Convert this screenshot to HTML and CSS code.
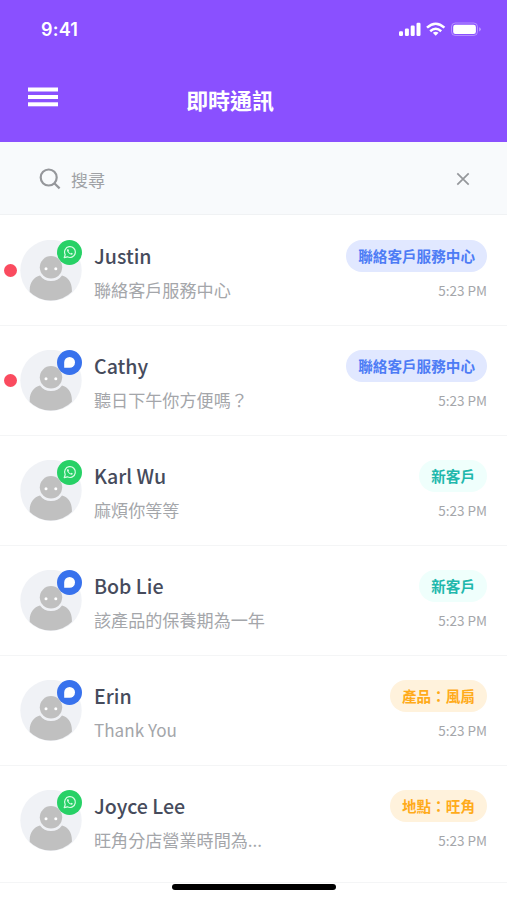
FILE: index.html
```html
<!DOCTYPE html>
<html lang="zh-Hant">
<head>
<meta charset="utf-8">
<meta name="viewport" content="width=device-width, initial-scale=1">
<title>即時通訊</title>
<link rel="stylesheet" href="styles.css">
</head>
<body>
<svg class="sprite" width="0" height="0" aria-hidden="true">
  <defs>
    <clipPath id="disc"><circle cx="30.75" cy="30" r="30.5"/></clipPath>
    <symbol id="avatar" viewBox="0 0 62 61">
      <circle cx="31" cy="30.5" r="30.7" fill="#f0f2f6"/>
      <g clip-path="url(#disc)">
        <path d="M9.700 61V50C9.700 42 14 37 20 35.400Q24 41 31 41T42 35.400C48 37 51.900 42 51.900 50V61Z" fill="#c0c0c0"/>
      </g>
      <circle cx="31" cy="27.300" r="11.200" fill="#c0c0c0"/>
      <circle cx="26" cy="28.800" r="1.500" fill="#fff"/>
      <circle cx="35.800" cy="28.800" r="1.500" fill="#fff"/>
    </symbol>
    <symbol id="whatsapp" viewBox="0 0 25 25">
      <circle cx="12.500" cy="12.500" r="12.500" fill="#27d166"/>
      <path d="M7.200 17.700L8.200 14.600A5.400 5.400 0 1 1 10.400 16.800Z" fill="none" stroke="#d9fbe5" stroke-width="1.200" stroke-linejoin="round"/>
      <path d="M10.500 9.200C9.400 10 10.200 11.800 11.600 13.100C13 14.500 14.900 15.200 15.600 14.200C16.100 13.500 15.800 13.300 14.500 12.700L13.600 13.500C12.700 13.100 11.900 12.300 11.500 11.500L12 10.700C11.500 9.300 11.200 8.900 10.500 9.200Z" fill="#d9fbe5"/>
    </symbol>
    <symbol id="chat" viewBox="0 0 25 25">
      <circle cx="12.500" cy="12.500" r="12.500" fill="#3872ed"/>
      <path d="M7.200 17.800V12.400A5.400 5.400 0 1 1 12.600 17.800Z" fill="#fff"/>
    </symbol>
  </defs>
</svg>
<header class="header">
  <div class="status">
    <span class="clock">9:41</span>
    <svg class="indicators" width="84" height="20" viewBox="0 0 84 20" fill="#fff">
      <rect x="1" y="11.200" width="4" height="4.800" rx="1.200"/>
      <rect x="6.900" y="8.500" width="4" height="7.500" rx="1.200"/>
      <rect x="12.700" y="5.500" width="4" height="10.500" rx="1.200"/>
      <rect x="18.500" y="2.700" width="4" height="13.300" rx="1.200"/>
      <g fill="none" stroke="#fff" stroke-width="2.500">
        <path d="M29 7.700Q37.700 -.300 46.400 7.700"/>
        <path d="M32.200 11.200Q37.700 6.300 43.200 11.200"/>
      </g>
      <path d="M37.700 15.800L34.800 12.800Q37.700 10.900 40.600 12.800Z"/>
      <rect x="53.500" y="3" width="26" height="12.500" rx="3.800" fill="none" stroke="#fff" stroke-opacity=".35"/>
      <rect x="55.200" y="4.700" width="22.700" height="9.200" rx="2.200"/>
      <path d="M81.200 7.200Q82.800 7.800 82.800 9.300T81.200 11.400Z" opacity=".45"/>
    </svg>
  </div>
  <div class="bar">
    <svg class="menu" width="30" height="20" viewBox="0 0 30 20" fill="#fff">
      <rect y=".500" width="30" height="4"/><rect y="8" width="30" height="4"/><rect y="15.300" width="30" height="4"/>
    </svg>
    <h1 class="title">即時通訊</h1>
  </div>
</header>
<div class="search">
  <svg width="22" height="22" viewBox="0 0 22 22" fill="none" stroke="#95979b" stroke-width="2.200">
    <circle cx="9.700" cy="9.500" r="8"/><path d="M15.300 15.200L20.600 20.400"/>
  </svg>
  <span class="placeholder">搜尋</span>
  <svg class="clear" width="14" height="14" viewBox="0 0 14 14" fill="none" stroke="#95979b" stroke-width="1.700">
    <path d="M1.300 1.300L12.700 12.700M12.700 1.300L1.300 12.700"/>
  </svg>
</div>
<main class="list">
  <article class="row unread">
    <div class="avatar"><svg class="face"><use href="#avatar"/></svg><svg class="channel"><use href="#whatsapp"/></svg></div>
    <div class="text"><h2 class="name">Justin</h2><p class="message">聯絡客戶服務中心</p></div>
    <div class="meta"><span class="tag blue">聯絡客戶服務中心</span><time class="time">5:23 PM</time></div>
  </article>
  <article class="row unread">
    <div class="avatar"><svg class="face"><use href="#avatar"/></svg><svg class="channel"><use href="#chat"/></svg></div>
    <div class="text"><h2 class="name">Cathy</h2><p class="message">聽日下午你方便嗎？</p></div>
    <div class="meta"><span class="tag blue">聯絡客戶服務中心</span><time class="time">5:23 PM</time></div>
  </article>
  <article class="row">
    <div class="avatar"><svg class="face"><use href="#avatar"/></svg><svg class="channel"><use href="#whatsapp"/></svg></div>
    <div class="text"><h2 class="name">Karl Wu</h2><p class="message">麻煩你等等</p></div>
    <div class="meta"><span class="tag teal">新客戶</span><time class="time">5:23 PM</time></div>
  </article>
  <article class="row">
    <div class="avatar"><svg class="face"><use href="#avatar"/></svg><svg class="channel"><use href="#chat"/></svg></div>
    <div class="text"><h2 class="name">Bob Lie</h2><p class="message">該產品的保養期為一年</p></div>
    <div class="meta"><span class="tag teal">新客戶</span><time class="time">5:23 PM</time></div>
  </article>
  <article class="row">
    <div class="avatar"><svg class="face"><use href="#avatar"/></svg><svg class="channel"><use href="#chat"/></svg></div>
    <div class="text"><h2 class="name">Erin</h2><p class="message">Thank You</p></div>
    <div class="meta"><span class="tag amber">產品：風扇</span><time class="time">5:23 PM</time></div>
  </article>
  <article class="row last">
    <div class="avatar"><svg class="face"><use href="#avatar"/></svg><svg class="channel"><use href="#whatsapp"/></svg></div>
    <div class="text"><h2 class="name">Joyce Lee</h2><p class="message">旺角分店營業時間為...</p></div>
    <div class="meta"><span class="tag amber">地點：旺角</span><time class="time">5:23 PM</time></div>
  </article>
</main>
<div class="home"></div>
</body>
</html>
```
FILE: styles.css
```css
* { box-sizing: border-box; }
body {
  margin: 0;
  height: 900px;
  overflow: hidden;
  background: #fff;
  font-family: "Noto Sans CJK TC", sans-serif;
}
h1, h2, p { margin: 0; }
svg { display: block; flex: none; }
.sprite { position: absolute; }

.header { height: 142px; background: #8a50ff; color: #fff; }
.status {
  height: 58px;
  padding: 0 25px 0 41px;
  display: flex;
  align-items: center;
  justify-content: space-between;
}
.clock { margin-top: 1px; font: 600 18px/20px Inter, sans-serif; letter-spacing: .2px; }
.indicators { margin-top: 2px; }
.bar {
  height: 84px;
  padding: 0 27px 0 28px;
  display: grid;
  grid-template-columns: 30px 1fr 78px;
  align-items: start;
}
.menu { margin-top: 29px; }
.title {
  margin-top: 27px;
  text-align: center;
  font-size: 22px;
  line-height: 28px;
  font-weight: 700;
  letter-spacing: -.1px;
}

.search {
  height: 73px;
  padding: 1px 37px 0 39px;
  display: flex;
  align-items: center;
  background: #f8fafc;
  border-bottom: 1px solid #f0f2f4;
}
.placeholder { margin: 2px 0 0 10px; flex: 1; font-size: 17px; line-height: 24px; color: #a0a2a6; }

.list { padding-top: 1px; }
.row {
  position: relative;
  height: 110px;
  padding: 24px 20px 0;
  display: flex;
  border-bottom: 1px solid #f4f5f6;
}
.row.last { height: 117px; }
.row.unread::before {
  content: "";
  position: absolute;
  left: 4px;
  top: 48px;
  width: 13px;
  height: 13px;
  border-radius: 50%;
  background: #fa4b5f;
}
.avatar { position: relative; width: 62px; height: 61px; flex: none; }
.face { width: 62px; height: 61px; }
.channel { position: absolute; right: 0; top: 0; width: 25px; height: 25px; }
.text { margin-left: 12px; flex: 1; }
.name {
  font-size: 19.6px;
  line-height: 32px;
  font-weight: 500;
  color: #464b5c;
}
.message { margin-top: 5px; font-size: 17.1px; line-height: 26px; color: #a4a6aa; }
.meta { display: flex; flex-direction: column; align-items: flex-end; }
.tag {
  height: 32px;
  padding: 0 12px;
  border-radius: 16px;
  font-size: 14.6px;
  line-height: 32px;
  font-weight: 700;
}
.blue { background: #e1e8ff; color: #4d7cf5; }
.teal { background: #effffc; color: #1fb8ac; }
.amber { background: #fff2dc; color: #ffab1a; }
.time { margin-top: 8px; font-size: 13.5px; line-height: 20px; color: #a4a6aa; }

.home { width: 164px; height: 6px; margin: 1px auto 0 172px; border-radius: 3px; background: #000; }
```
